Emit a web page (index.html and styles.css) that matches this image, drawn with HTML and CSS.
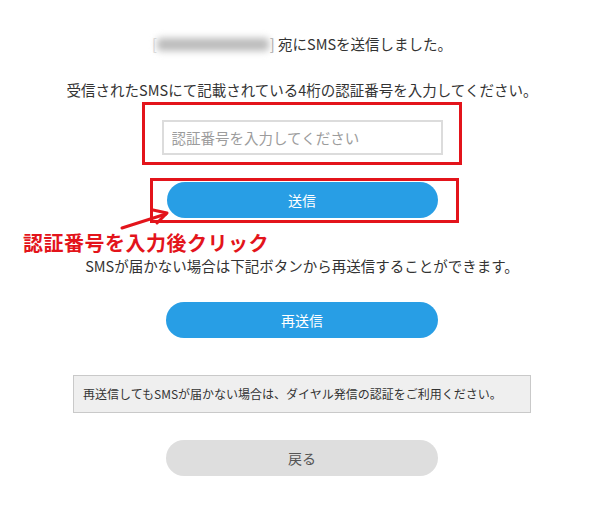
FILE: index.html
```html
<!DOCTYPE html>
<html lang="ja">
<head>
<meta charset="utf-8">
<link rel="stylesheet" href="styles.css">
</head>
<body>
<main class="page">
  <p class="sent"><span class="bracket bracket-faint">[</span><span class="masked"></span><span class="bracket">]</span> 宛にSMSを送信しました。</p>
  <p class="lead">受信されたSMSにて記載されている4桁の認証番号を入力してください。</p>
  <div class="mark mark-input">
    <input class="code" type="text" placeholder="認証番号を入力してください">
  </div>
  <div class="mark mark-btn">
    <button class="btn btn-blue">送信</button>
  </div>
  <p class="hint">認証番号を入力後クリック</p>
  <svg class="arrow" width="70" height="34" viewBox="0 0 70 34">
    <line x1="12" y1="26" x2="56" y2="12" stroke="#e3141b" stroke-width="3" stroke-linecap="round"/>
    <polyline points="43,8 57,11 47,21" fill="none" stroke="#e3141b" stroke-width="3" stroke-linecap="round" stroke-linejoin="round"/>
  </svg>
  <p class="resend-text">SMSが届かない場合は下記ボタンから再送信することができます。</p>
  <button class="btn btn-blue resend">再送信</button>
  <div class="info">再送信してもSMSが届かない場合は、ダイヤル発信の認証をご利用ください。</div>
  <button class="btn btn-gray back">戻る</button>
</main>
</body>
</html>
```
FILE: styles.css
```css
html, body {
  margin: 0;
  padding: 0;
  background: #ffffff;
}
body {
  font-family: "Noto Sans CJK JP", "Noto Sans", sans-serif;
  color: #333333;
}
.page {
  position: relative;
  width: 600px;
  box-sizing: border-box;
  padding: 34px 0 0 4px;
  display: flex;
  flex-direction: column;
  align-items: center;
}
.page p {
  margin: 0;
}
.sent {
  font-size: 14.5px;
  line-height: 20px;
  white-space: nowrap;
}
.bracket {
  color: #a8a8a8;
}
.bracket-faint {
  color: #d6d6d6;
}
.masked {
  display: inline-block;
  width: 112px;
  height: 13px;
  background: #bcbcbc;
  border-radius: 4px;
  filter: blur(3.5px);
  margin: 0 1px 0 0;
  vertical-align: -1px;
}
.lead {
  margin-top: 26px !important;
  font-size: 14.5px;
  line-height: 20px;
}
.mark {
  border: 3px solid #e3141b;
  box-sizing: border-box;
}
.mark-input {
  margin-top: 2px;
  width: 320px;
  padding: 15px 0 7px;
  display: flex;
  justify-content: center;
}
.code {
  width: 281px;
  height: 35px;
  box-sizing: border-box;
  border: 2px solid #dcdcdc;
  padding: 0 8px;
  font-family: inherit;
  font-size: 14.5px;
  color: #333;
  outline: none;
  background: #fff;
}
.code::placeholder {
  color: #9c9c9c;
}
.mark-btn {
  margin-top: 13px;
  width: 309px;
  padding: 1px 18px 2px 14px;
  display: flex;
  justify-content: flex-start;
  margin-left: 4px;
}
.btn {
  width: 272px;
  height: 36px;
  border: none;
  border-radius: 18px;
  font-family: inherit;
  font-size: 14px;
  cursor: pointer;
  padding: 0;
}
.btn-blue {
  background: #289ee5;
  color: #ffffff;
}
.btn-gray {
  background: #dedede;
  color: #555555;
}
.hint {
  align-self: flex-start;
  margin: 8px 0 0 19px !important;
  font-size: 20px;
  line-height: 24px;
  font-weight: 700;
  color: #e3141b;
  letter-spacing: 0.5px;
}
.arrow {
  position: absolute;
  left: 110px;
  top: 202px;
}
.resend-text {
  margin-top: 1px !important;
  font-size: 14.5px;
  line-height: 20px;
}
.resend {
  margin-top: 26px;
}
.info {
  margin-top: 37px;
  width: 458px;
  box-sizing: border-box;
  background: #efefef;
  border: 1px solid #c9c9c9;
  padding: 9px 9px;
  font-size: 12px;
  line-height: 18px;
  color: #333;
}
.back {
  margin-top: 27px;
}
```
